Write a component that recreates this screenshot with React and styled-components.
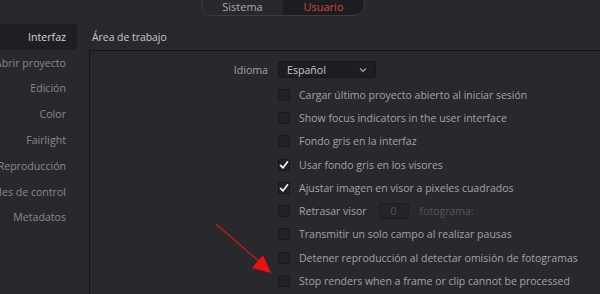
import React from "react";
import styled, { createGlobalStyle } from "styled-components";

const Global = createGlobalStyle`
  html, body { margin: 0; padding: 0; background: #28282d; }
  body { font-family: "Open Sans", "Noto Sans", sans-serif; font-size: 10.5px; overflow: hidden; }
  #root { width: 600px; height: 294px; }
`;

const Page = styled.div`
  position: relative;
  width: 600px;
  height: 294px;
  background: #28282d;
  display: flex;
  flex-direction: column;
  overflow: hidden;
`;

const Header = styled.div`
  height: 16px;
  display: flex;
  align-items: flex-end;
  padding-left: 201px;
  overflow: hidden;
  flex-shrink: 0;
`;

const Pill = styled.div`
  display: flex;
  height: 22px;
  width: 164px;
  border: 1px solid #3c3c41;
  border-radius: 11px;
  overflow: hidden;
  box-sizing: border-box;
`;

const Seg = styled.div`
  flex: 1;
  display: flex;
  align-items: flex-end;
  justify-content: center;
  padding-bottom: 1px;
  font-size: 11px;
  line-height: 15px;
  color: ${(p) => (p.$active ? "#d8453f" : "#a9a9ad")};
  background: ${(p) => (p.$active ? "#1d1d21" : "transparent")};
`;

const Body = styled.div`
  display: flex;
  flex: 1;
  padding-top: 8px;
`;

const Sidebar = styled.div`
  width: 77px;
  flex-shrink: 0;
  display: flex;
  flex-direction: column;
`;

const SideItem = styled.div`
  height: 25.8px;
  display: flex;
  align-items: center;
  justify-content: flex-end;
  padding-right: 11px;
  white-space: nowrap;
  overflow: hidden;
  font-size: 10.6px;
  color: ${(p) => (p.$active ? "#d6d6d9" : "#88888d")};
  background: ${(p) => (p.$active ? "#1f1f23" : "transparent")};
`;

const Content = styled.div`
  flex: 1;
  display: flex;
  flex-direction: column;
  padding-left: 12px;
`;

const Title = styled.div`
  height: 26px;
  display: flex;
  align-items: center;
  padding-left: 3px;
  font-size: 10.4px;
  color: #c9c9cc;
`;

const Panel = styled.div`
  flex: 1;
  border-top: 1px solid #141416;
  border-left: 1px solid #141416;
  padding-top: 9px;
  display: grid;
  grid-template-columns: 178px 1fr;
  grid-auto-rows: 23.25px;
  column-gap: 10px;
  align-content: start;
`;

const IdiomaRow = styled.div`
  grid-column: 1 / 3;
  display: grid;
  grid-template-columns: 178px 1fr;
  column-gap: 10px;
  align-items: center;
  height: 19px;
  margin-bottom: 1px;
`;

const Label = styled.div`
  text-align: right;
  color: #a3a3a8;
  font-size: 10.6px;
`;

const Select = styled.div`
  width: 98px;
  height: 17px;
  box-sizing: border-box;
  background: #1e1e22;
  border: 1px solid #18181b;
  border-radius: 3px;
  display: flex;
  align-items: center;
  justify-content: space-between;
  padding: 0 8px 0 8px;
  color: #c6c6ca;
  font-size: 10.6px;
`;

const Row = styled.div`
  grid-column: 2;
  display: flex;
  align-items: center;
  gap: 9px;
  white-space: nowrap;
`;

const Box = styled.div`
  width: 12px;
  height: 12px;
  box-sizing: border-box;
  border: 1px solid #19191c;
  border-radius: 2px;
  background: #222226;
  display: flex;
  align-items: center;
  justify-content: center;
  flex-shrink: 0;
`;

const RowText = styled.span`
  color: ${(p) => (p.$dim ? "#56565b" : "#a3a3a8")};
  font-size: 10.5px;
`;

const NumInput = styled.div`
  width: 30px;
  height: 16px;
  box-sizing: border-box;
  background: #242428;
  border: 1px solid #1e1e21;
  border-radius: 2px;
  display: flex;
  align-items: center;
  justify-content: center;
  color: #56565b;
  font-size: 10.5px;
  margin-left: 3px;
  margin-right: 2px;
`;

const Arrow = styled.svg`
  position: absolute;
  left: 0;
  top: 0;
  pointer-events: none;
`;

const Check = () => (
  <svg width="10" height="10" viewBox="0 0 10 10">
    <path d="M1.5 5.3 L4 7.8 L8.6 1.8" fill="none" stroke="#f2f2f2" strokeWidth="1.7" strokeLinecap="round" strokeLinejoin="round" />
  </svg>
);

const Chevron = () => (
  <svg width="8" height="6" viewBox="0 0 8 6">
    <path d="M1 1.5 L4 4.5 L7 1.5" fill="none" stroke="#a8a8ac" strokeWidth="1.2" />
  </svg>
);

const sideItems = [
  "Interfaz",
  "Abrir proyecto",
  "Edición",
  "Color",
  "Fairlight",
  "Reproducción",
  "Paneles de control",
  "Metadatos",
];

const options = [
  { t: "Cargar último proyecto abierto al iniciar sesión" },
  { t: "Show focus indicators in the user interface" },
  { t: "Fondo gris en la interfaz" },
  { t: "Usar fondo gris en los visores", c: true },
  { t: "Ajustar imagen en visor a pixeles cuadrados", c: true },
  { t: "Retrasar visor", delay: true },
  { t: "Transmitir un solo campo al realizar pausas" },
  { t: "Detener reproducción al detectar omisión de fotogramas" },
  { t: "Stop renders when a frame or clip cannot be processed" },
];

export default function App() {
  return (
    <Page>
      <Global />
      <Header>
        <Pill>
          <Seg>Sistema</Seg>
          <Seg $active>Usuario</Seg>
        </Pill>
      </Header>
      <Body>
        <Sidebar>
          {sideItems.map((s, i) => (
            <SideItem key={s} $active={i === 0}>{s}</SideItem>
          ))}
        </Sidebar>
        <Content>
          <Title>Área de trabajo</Title>
          <Panel>
            <IdiomaRow>
              <Label>Idioma</Label>
              <Select>
                <span>Español</span>
                <Chevron />
              </Select>
            </IdiomaRow>
            {options.map((o) => (
              <Row key={o.t}>
                <Box>{o.c && <Check />}</Box>
                <RowText>{o.t}</RowText>
                {o.delay && (
                  <>
                    <NumInput>0</NumInput>
                    <RowText $dim>fotograma:</RowText>
                  </>
                )}
              </Row>
            ))}
          </Panel>
        </Content>
      </Body>
      <Arrow width="600" height="294" viewBox="0 0 600 294">
        <line x1="216" y1="224" x2="262" y2="264" stroke="#d91818" strokeWidth="1.1" />
        <polygon points="271,273 252,268 263,255" fill="#f01010" />
      </Arrow>
    </Page>
  );
}
